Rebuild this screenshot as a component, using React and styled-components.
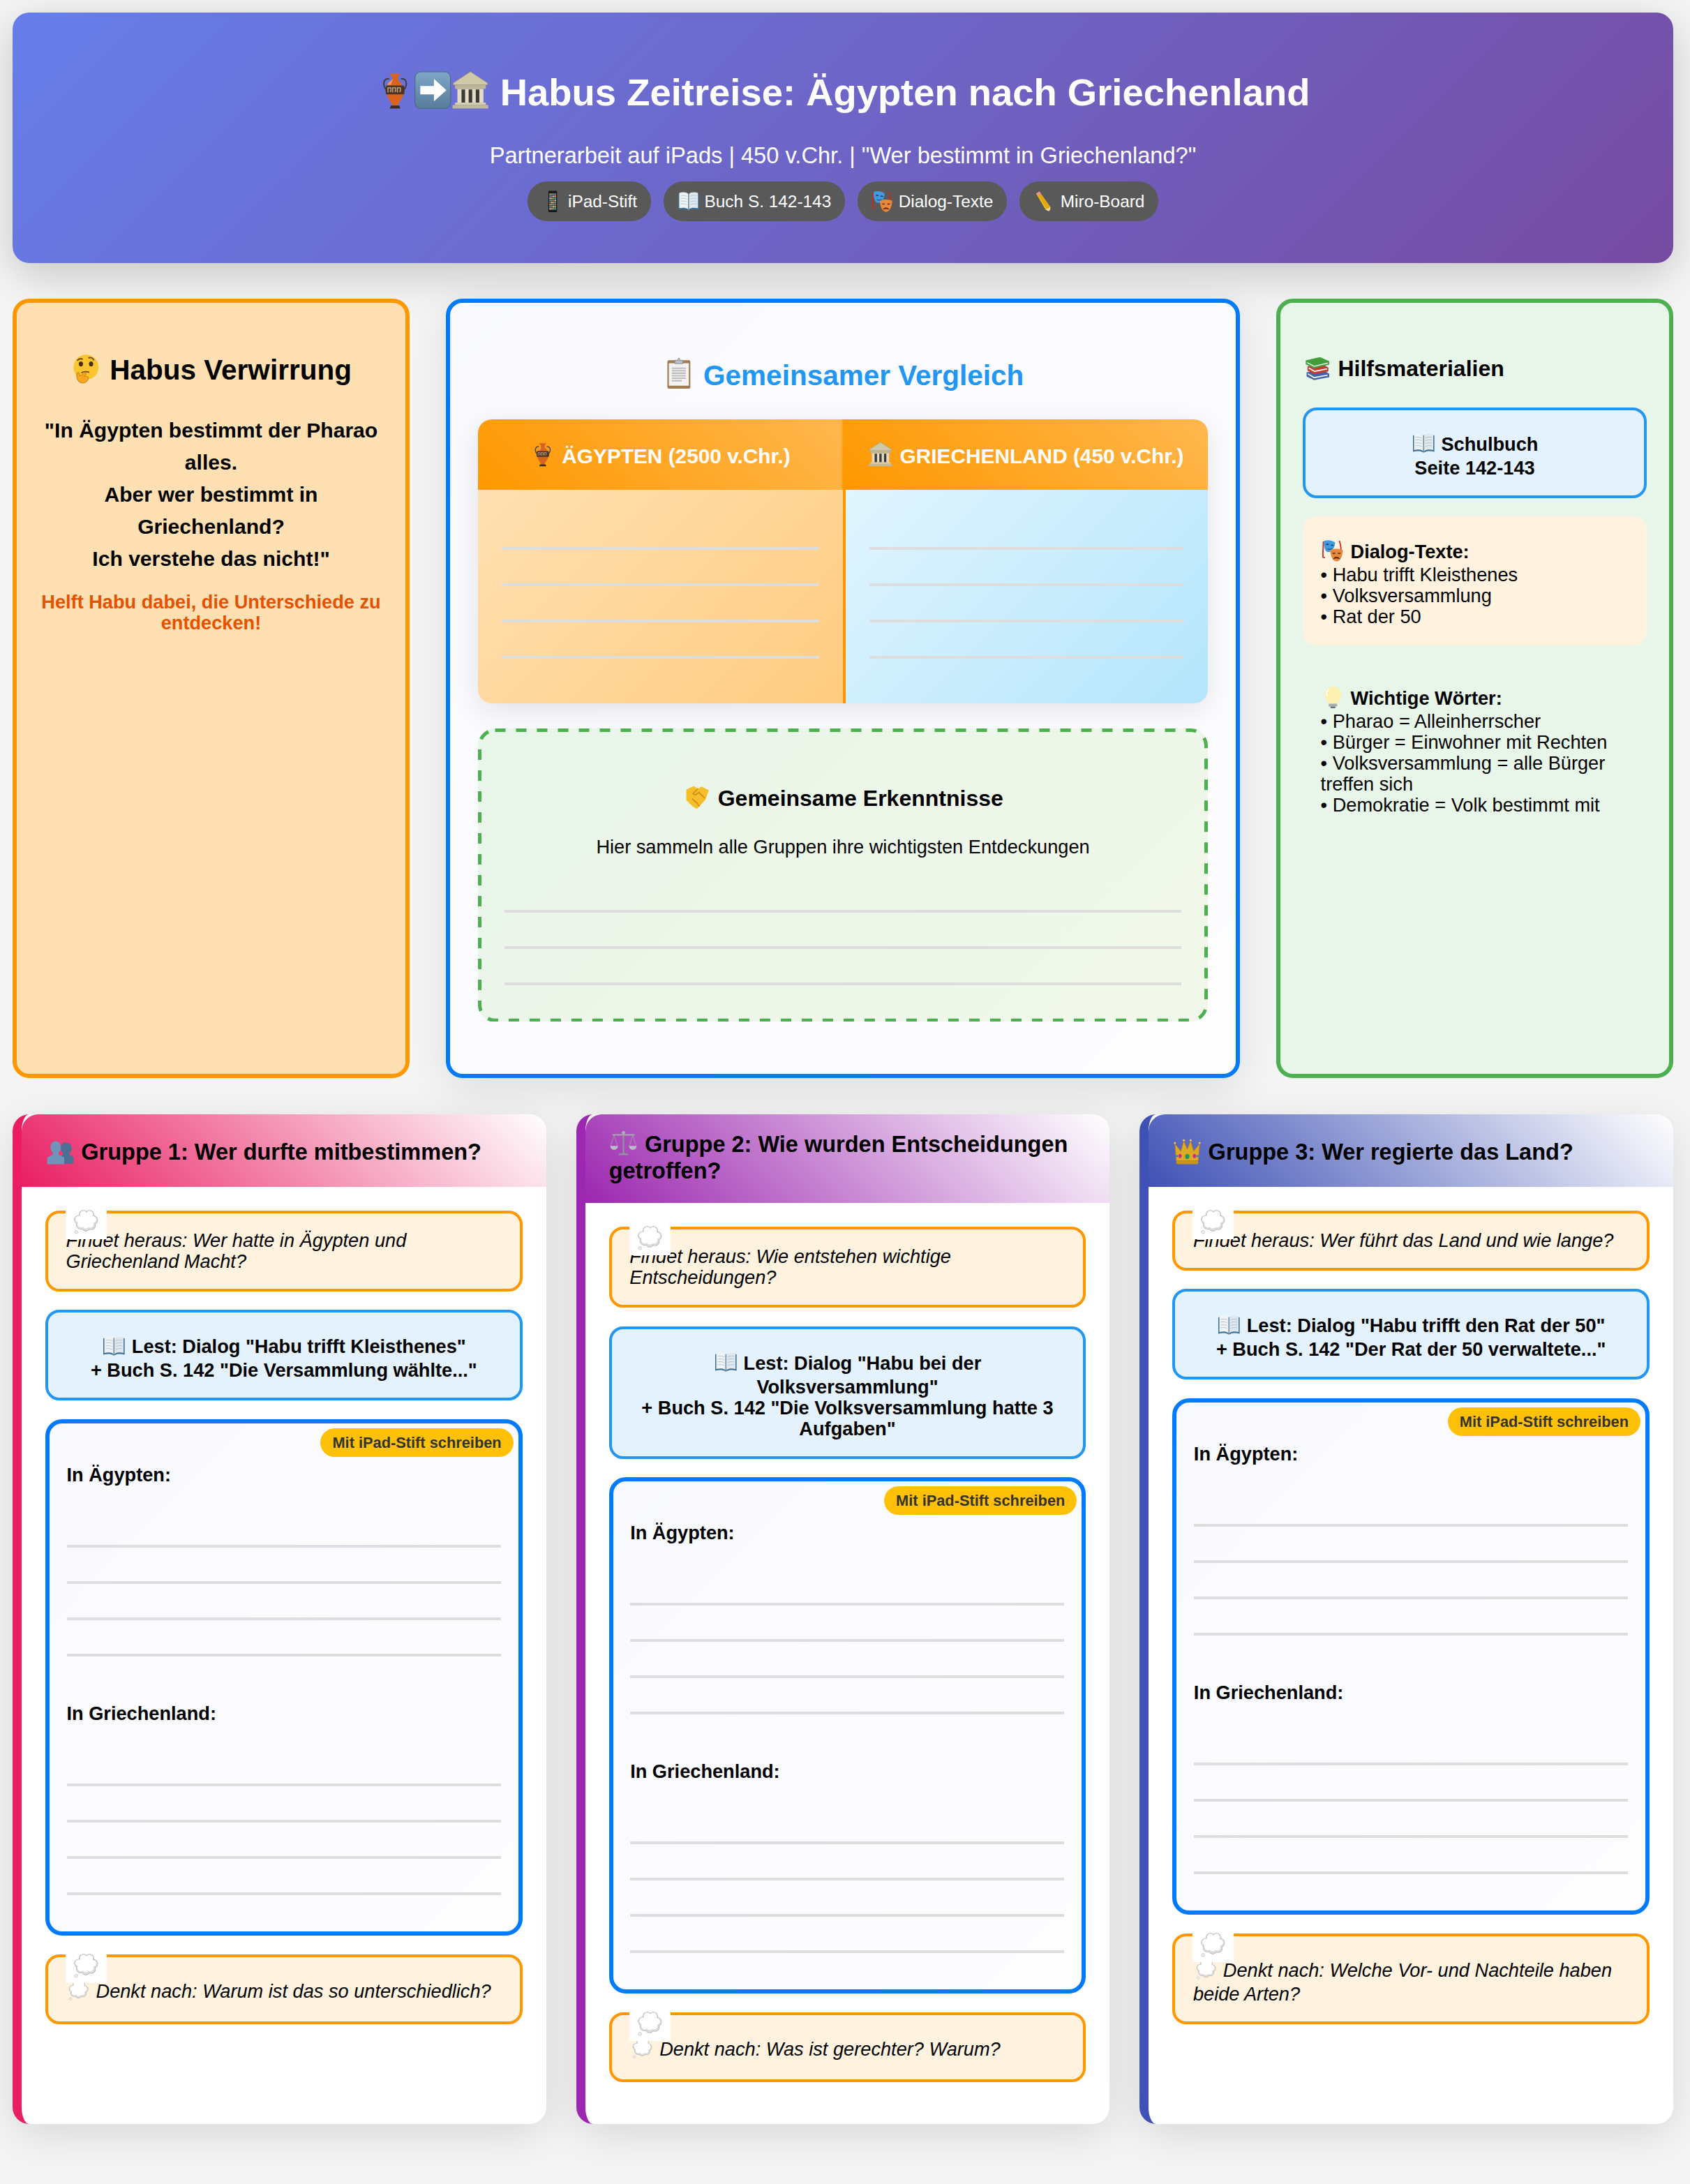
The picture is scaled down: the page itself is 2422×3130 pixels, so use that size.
import React from 'react';
import styled, { createGlobalStyle, css } from 'styled-components';

const Global = createGlobalStyle`
  html, body { margin: 0; padding: 0; background: #f5f5f5; }
  body { font-family: "Liberation Sans", Arial, sans-serif; color: #000; }
  * { box-sizing: border-box; }
`;

const Emoji = styled.svg`
  display: inline-block;
  box-sizing: content-box;
  width: ${p => p.$s || 1.2}em;
  height: ${p => p.$s || 1.2}em;
  ${p => p.$flat
    ? css`
      margin: -1em ${p.$side ?? 0.05}em 0;
      vertical-align: ${p.$va || '-.09em'};
    `
    : css`
      margin: ${1.265 + (p.$low ?? 0.2) - (p.$s || 1.2)}em ${p.$side ?? 0.05}em 0;
      padding-bottom: ${0.353 - (p.$low ?? 0.2)}em;
      vertical-align: -.353em;
    `}
`;

const glyphs = {
  vase: (<g>
    <path d="M22 13c-6-1-9 3-9 8s3 10 8 13M42 13c6-1 9 3 9 8s-3 10-8 13" fill="none" stroke="#3d3f46" strokeWidth="2.5" />
    <path d="M24 4h16v3l-3 2v5c0 3 10 7 10 19 0 11-9 20-11 25h-8c-2-5-11-14-11-25 0-12 10-16 10-19V9l-3-2z" fill="#d8641e" />
    <path d="M17.300 24h29.400c.8 2.500 1.300 5.500 1.300 9 0 2-.3 4-.9 6H16.900c-.6-2-.9-4-.9-6 0-3.500.5-6.500 1.300-9z" fill="#4a3428" />
    <path d="M20 36v-8h5v6h-2M28 36v-8h5v6h-2M36 36v-8h5v6h-2" fill="none" stroke="#d9b184" strokeWidth="1.500" />
    <path d="M25 58h14l2 5H23z" fill="#3b2a22" />
    <path d="M27 14c-3 3-7 5-8 9h6c1-3 3-6 3-9z" fill="#f19a55" />
  </g>),
  arrow: (<g>
    <defs><linearGradient id="arrowBg" x1="0" y1="0" x2="0" y2="1"><stop offset="0" stopColor="#7fa6c8" /><stop offset="1" stopColor="#587b9a" /></linearGradient></defs>
    <rect x="2" y="1" width="60" height="62" rx="10" fill="url(#arrowBg)" stroke="#4d6d8a" strokeWidth="1.500" />
    <path d="M11 25h23V13l21 19-21 19V39H11z" fill="#fff" />
  </g>),
  temple: (<g>
    <path d="M32 1 61 20v3H3v-3z" fill="#cfc8a9" stroke="#9a9478" strokeWidth="1" />
    <rect x="6" y="23" width="52" height="7" fill="#bdb696" />
    <rect x="10" y="30" width="44" height="23" fill="#e3ddc2" />
    <path d="M17 31h6v22h-6zM29 31h6v22h-6zM41 31h6v22h-6z" fill="#3a3a36" />
    <rect x="6" y="53" width="52" height="4" fill="#d5cfb2" />
    <rect x="2" y="57" width="60" height="6" fill="#bfb899" />
  </g>),
  ipad: (<g>
    <rect x="20" y="1" width="25" height="62" rx="3" fill="#161618" />
    <rect x="22" y="7" width="21" height="50" fill="#31343a" />
    {[0, 1, 2, 3, 4, 5, 6, 7].map(r => [0, 1, 2, 3].map(c => (
      <rect key={r + '-' + c} x={23 + c * 5} y={9 + r * 6} width="4" height="4" fill={['#e8b23a', '#5fc36e', '#4fa6e8', '#e96a5a', '#d9d9d9'][(r * 2 + c) % 5]} />
    )))}
  </g>),
  book: (<g>
    <path d="M2 10c10-4 22-4 30 1 8-5 20-5 30-1v46c-10-3-22-3-30 2-8-5-20-5-30-2z" fill="#3f6f93" />
    <path d="M5 7c9-3 20-3 26 3v44C25 49 14 49 5 51z" fill="#eef3f6" />
    <path d="M59 7c-9-3-20-3-26 3v44c6-5 17-5 26-3z" fill="#dfe8ee" />
    <path d="M9 15c6-1 13-1 18 2M9 23c6-1 13-1 18 2M9 31c6-1 13-1 18 2M9 39c6-1 13-1 18 2M55 15c-6-1-13-1-18 2M55 23c-6-1-13-1-18 2M55 31c-6-1-13-1-18 2M55 39c-6-1-13-1-18 2" stroke="#a9b8c3" strokeWidth="1.500" fill="none" />
    <rect x="30.500" y="9" width="3" height="49" fill="#7d93a3" />
  </g>),
  masks: (<g>
    <path d="M5 6c0 18-2 30-1 44l6 2M50 4c4 12 6 24 4 38" stroke="#c72a22" strokeWidth="3.500" fill="none" />
    <path d="M6 5c10-5 24-3 32 4-1 14-8 27-19 27C9 36 6 20 6 5z" fill="#3f9ae0" />
    <path d="M13 15c2-2 5-2 7 0M26 17c2-1 5-1 7 1" stroke="#123f66" strokeWidth="3" fill="none" />
    <path d="M14 24c5 4 11 4 16 1-2 6-13 6-16-1z" fill="#123f66" />
    <path d="M24 30c10-5 26-5 36 0-1 16-7 32-18 32S25 46 24 30z" fill="#e8883a" />
    <path d="M31 38c2 2 5 2 7 0M46 38c2 2 5 2 7 0" stroke="#5a2c10" strokeWidth="3" fill="none" />
    <path d="M34 54c4-5 12-5 16 0-5-2-11-2-16 0z" fill="#5a2c10" stroke="#5a2c10" strokeWidth="2" />
  </g>),
  pencil: (<g>
    <path d="M8 9 17 3l32 45-1 14-13-7z" fill="#f5c31c" />
    <path d="M17 3l32 45-1 14-8-5-28-45z" fill="#e3a90e" />
    <path d="M8 9 17 3l5 7-9 6z" fill="#e8948f" />
    <path d="M35 55l13 7 1-14z" fill="#e9d3ae" />
    <path d="M43.500 60 48 62l.4-5z" fill="#333" />
  </g>),
  clipboard: (<g>
    <rect x="9" y="6" width="46" height="57" rx="3" fill="#a37b4c" />
    <rect x="12" y="12" width="40" height="45" fill="#f2f2f2" />
    <path d="M18 22h28M18 27h28M18 32h28M18 37h28M18 42h28M18 47h20" stroke="#bdbdbd" strokeWidth="3" />
    <path d="M24 6h6c0-6 4-6 4 0h6v7H24z" fill="#b8bcc2" stroke="#7d8086" strokeWidth="1" />
  </g>),
  handshake: (<g>
    <path d="M6 14 24 6l10 6 8-5 18 9-8 22-18 20c-4 3-8 1-9-2-4 0-7-3-7-6-4 0-6-3-6-6-4-1-6-4-6-6z" fill="#f6bf2a" />
    <path d="M34 12 22 24c3 4 7 3 10 0l4-3 14 14" fill="none" stroke="#c98a12" strokeWidth="2.500" />
    <path d="M20 36l8 8M27 42l7 7M33 50l5 4" stroke="#c98a12" strokeWidth="2.500" />
  </g>),
  books: (<g>
    <path d="M6 44 44 38l16 10v8L24 63 6 54z" fill="#3f62a8" />
    <path d="M9 48 24 57l32-6" stroke="#eee" strokeWidth="3" fill="none" />
    <path d="M8 30 42 24l16 9v9l-34 7-16-9z" fill="#c8392f" />
    <path d="M11 34l14 8 30-6" stroke="#eee" strokeWidth="3" fill="none" />
    <path d="M4 16 38 8l22 10v8l-36 9-20-10z" fill="#3f9d3c" />
    <path d="M7 21 24 30l33-8" stroke="#e8f4e0" strokeWidth="2.500" fill="none" />
  </g>),
  bulb: (<g>
    <path d="M32 2c-14 0-24 10-24 23 0 10 8 15 11 25h26c3-10 11-15 11-25C56 12 46 2 32 2z" fill="#fdf1b2" />
    <path d="M20 10c-6 5-7 13-4 19" stroke="#fff" strokeWidth="4" fill="none" />
    <rect x="20" y="50" width="24" height="8" rx="2" fill="#a9adb3" />
    <rect x="25" y="58" width="14" height="5" rx="2" fill="#6e7277" />
  </g>),
  think: (<g>
    <circle cx="32" cy="29" r="27" fill="#fbc52f" />
    <path d="M13 15c3-4 8-5 12-3M37 9c5-2 10 0 12 5" stroke="#7a4a12" strokeWidth="3" fill="none" />
    <ellipse cx="21" cy="22" rx="4.500" ry="5.500" fill="#4a2c10" />
    <ellipse cx="43" cy="22" rx="4.500" ry="5.500" fill="#4a2c10" />
    <path d="M22 41c5-3 11-3 17-1" stroke="#7a4a12" strokeWidth="3" fill="none" />
    <path d="M13 42c-3 8 0 21 12 21 8 0 13-6 12-12-1-4-8-2-10-2l5-4c2-3-1-5-4-3l-9 6-2-6c-1-3-3-3-4 0z" fill="#f4a71f" stroke="#c97f12" strokeWidth="1.500" />
  </g>),
  people: (<g>
    <path d="M44 12c-7 0-11 6-11 13 0 5 2 9 5 11v5l-9 5v16h34V46l-9-5v-5c3-2 5-6 5-11 0-7-8-13-15-13z" fill="#4c6f92" />
    <path d="M21 9C13 9 9 16 9 23c0 6 2 10 5 12v6L1 47v16h40V47l-13-6v-6c3-2 5-6 5-12 0-7-4-14-12-14z" fill="#6f95bb" />
  </g>),
  scales: (<g>
    <rect x="30" y="8" width="4" height="48" fill="#8e9299" />
    <circle cx="32" cy="7" r="4" fill="#a9adb4" />
    <path d="M6 12h52" stroke="#a0a4ab" strokeWidth="3.500" />
    <path d="M10 13 2 38M10 13l8 25M54 13l-8 25M54 13l8 25" stroke="#9a9ea5" strokeWidth="1.500" fill="none" />
    <path d="M1 38h18c0 6-4 9-9 9s-9-3-9-9zM45 38h18c0 6-4 9-9 9s-9-3-9-9z" fill="#b9bdc4" />
    <path d="M20 60c0-4 6-5 12-5s12 1 12 5z" fill="#8e9299" />
  </g>),
  crown: (<g>
    <path d="M3 15 17 33 24 8l8 20 8-20 7 25 14-18-3 40H6z" fill="#dfa928" stroke="#b47f16" strokeWidth="1.500" />
    <circle cx="3" cy="13" r="2.500" fill="#f0c64a" /><circle cx="24" cy="7" r="2.500" fill="#f0c64a" /><circle cx="40" cy="7" r="2.500" fill="#f0c64a" /><circle cx="61" cy="13" r="2.500" fill="#f0c64a" />
    <rect x="6" y="55" width="52" height="8" rx="3" fill="#c9931b" />
    <ellipse cx="32" cy="45" rx="5" ry="6" fill="#1c9a5a" />
    <ellipse cx="15" cy="44" rx="4" ry="5" fill="#c3327a" />
    <ellipse cx="49" cy="44" rx="4" ry="5" fill="#c3327a" />
    <circle cx="8" cy="44" r="2.500" fill="#2b7fc9" /><circle cx="56" cy="44" r="2.500" fill="#2b7fc9" />
  </g>),
  cloud: (<g>
    <g fill="#a9a9a9">
      <circle cx="27" cy="12" r="11.500" /><circle cx="42" cy="12" r="11.500" /><circle cx="52" cy="25" r="11" />
      <circle cx="46" cy="38" r="11.500" /><circle cx="33" cy="42" r="11" /><circle cx="20" cy="37" r="11.500" />
      <circle cx="15" cy="24" r="11" />
    </g>
    <g fill="#dcdcdc">
      <circle cx="27" cy="12" r="10.500" /><circle cx="42" cy="12" r="10.500" /><circle cx="52" cy="25" r="10" />
      <circle cx="46" cy="38" r="10.500" /><circle cx="33" cy="42" r="10" /><circle cx="20" cy="37" r="10.500" />
      <circle cx="15" cy="24" r="10" />
    </g>
    <g fill="#fff">
      <circle cx="27" cy="11" r="8.500" /><circle cx="42" cy="11" r="8.500" /><circle cx="50" cy="24" r="8.500" />
      <circle cx="44" cy="36" r="8" /><circle cx="33" cy="38" r="8" /><circle cx="21" cy="35" r="8.500" />
      <circle cx="16" cy="23" r="8.500" /><circle cx="33" cy="24" r="14" />
    </g>
    <circle cx="9" cy="55" r="3.800" fill="#f4f4f4" stroke="#b5b5b5" strokeWidth="1.200" />
  </g>),
};

const Icon = ({ name, ...rest }) => (
  <Emoji viewBox="0 0 64 64" aria-hidden="true" {...rest}>{glyphs[name]}</Emoji>
);

const Page = styled.div`
  width: 2380px;
  margin-left: 18px;
  padding: 18px 0 85px;
`;

const Hero = styled.header`
  height: 359px;
  padding: 84px 40px 0;
  border-radius: 24px;
  background: linear-gradient(135deg, #667eea 0%, #764ba2 100%);
  color: #fff;
  text-align: center;
  box-shadow: 0 16px 64px rgba(0, 0, 0, .2);
`;

const Title = styled.h1`
  margin: 0 0 41px;
  font-size: 54.4px;
  line-height: 62px;
  font-weight: 700;
`;

const Subtitle = styled.p`
  margin: 0 0 19px;
  font-size: 32.64px;
  line-height: 36px;
`;

const Pills = styled.div`
  display: flex;
  justify-content: center;
  gap: 18px;
`;

const Pill = styled.span`
  height: 57px;
  padding: 12px 20px;
  border-radius: 28px;
  background: #595959;
  font-size: 24.4px;
  line-height: 33px;
  white-space: nowrap;
`;

const Main = styled.section`
  display: grid;
  grid-template-columns: 1fr 2fr 1fr;
  gap: 52px;
  margin: 51px 0 52px;
`;

const Panel = styled.div`
  border: 6px solid ${p => p.$border};
  border-radius: 24px;
  background: ${p => p.$bg};
`;

const HabuPanel = styled(Panel)`
  padding: 59px 32px 32px;
  text-align: center;
`;

const BigHeading = styled.h2`
  margin: 0;
  font-size: 40.5px;
  line-height: 46px;
  font-weight: 700;
  color: ${p => p.$color || '#000'};
  text-align: center;
`;

const Quote = styled.p`
  margin: 35px 0 24px;
  font-size: 30.1px;
  line-height: 46px;
  font-weight: 700;
`;

const Help = styled.p`
  margin: 0;
  font-size: 27.2px;
  line-height: 30px;
  font-weight: 700;
  color: #e65100;
`;

const CompareCard = styled(Panel)`
  padding: 67px 40px 75px;
  box-shadow: 0 16px 64px rgba(0, 0, 0, .1);
`;

const Table = styled.div`
  display: grid;
  grid-template-columns: 1fr 1fr;
  grid-template-rows: 101px 306px;
  margin: 34px 0 36px;
  border-radius: 20px;
  overflow: hidden;
  box-shadow: 0 10px 40px rgba(0, 0, 0, .1);
`;

const TableHead = styled.div`
  padding: 25px 10px 0;
  background: linear-gradient(45deg, #ff9800, #ffb74d);
  color: #fff;
  text-align: center;
  font-size: 29.8px;
  line-height: 34px;
  font-weight: 700;
  white-space: nowrap;
  ${p => p.$first && css`border-right: 2px solid rgba(255, 255, 255, .12);`}
`;

const Cell = styled.div`
  padding: 34px 34px 0;
  background: ${p => p.$first
    ? 'linear-gradient(135deg, #ffe0b2, #ffcc80)'
    : 'linear-gradient(135deg, #e1f5fe, #b3e5fc)'};
  ${p => !p.$first && css`border-left: 4px solid #ff9800;`}
`;

const Rule = styled.div`
  height: 52px;
  border-bottom: 4px solid #ddd;
`;

const Shared = styled.div`
  position: relative;
  padding: 71px 38px 52px;
  border-radius: 24px;
  background: linear-gradient(135deg, #e8f5e9, #f1f8e9);
  text-align: center;
`;

const DashFrame = styled.svg`
  position: absolute;
  inset: 0;
  width: 100%;
  height: 100%;
  fill: none;
  stroke: #4caf50;
  stroke-width: 5px;
  stroke-dasharray: 15 15;
  pointer-events: none;

  rect {
    x: 2.5px;
    y: 2.5px;
    width: calc(100% - 5px);
    height: calc(100% - 5px);
    rx: 22px;
    ry: 22px;
  }
`;

const MidHeading = styled.h3`
  margin: 0;
  font-size: 32px;
  line-height: 37px;
  font-weight: 700;
`;

const SharedText = styled.p`
  margin: 33px 0 27px;
  font-size: 27.2px;
  line-height: 30px;
`;

const ToolsPanel = styled(Panel)`
  padding: 65px 32px 32px;
`;

const BlueBox = styled.div`
  padding: 24px 25.6px;
  border: 4px solid #2196f3;
  border-radius: 20px;
  background: #e3f2fd;
  text-align: center;
  font-size: 27.2px;
  line-height: 30px;
  font-weight: 700;
`;

const BookCard = styled(BlueBox)`
  margin: 33px 0 26px;
`;

const InfoBox = styled.div`
  padding: 25.6px;
  border-radius: 20px;
  background: ${p => p.$bg || 'transparent'};
  font-size: 27.2px;
  line-height: 30px;
  & + & { margin-top: 25px; }
`;

const Groups = styled.section`
  display: grid;
  grid-template-columns: repeat(3, 1fr);
  gap: 43px;
`;

const Group = styled.article`
  display: flex;
  flex-direction: column;
  border-left: 13px solid ${p => p.$color};
  border-radius: 24px;
  background: #fff;
  overflow: hidden;
  box-shadow: 0 16px 64px rgba(0, 0, 0, .12);
`;

const GroupHead = styled.h3`
  margin: 0;
  padding: 24px 34px 27px;
  border-radius: 24px 24px 0 0;
  background: linear-gradient(45deg, ${p => p.$color}, #fff);
  font-size: 32.5px;
  line-height: 38px;
  font-weight: 700;
`;

const GroupBody = styled.div`
  display: flex;
  flex-direction: column;
  gap: 26.6px;
  padding: 34px 34px 60px;
`;

const Task = styled.div`
  position: relative;
  padding: 24px 25.6px;
  border: 4px solid #ff9800;
  border-radius: 20px;
  background: #fff3e0;
  font-size: 27.2px;
  line-height: 30px;
  font-style: italic;
`;

const Bubble = styled.span`
  position: absolute;
  top: -5px;
  left: 25px;
  width: 59px;
  height: 42px;
  padding-left: 10px;
  background: #fff;
  font-size: 37px;
  line-height: 0;
  overflow: hidden;
`;

const BubbleIcon = styled(Emoji)`
  margin: 0;
  padding: 0;
  vertical-align: top;
`;

const Write = styled.div`
  position: relative;
  padding: 58px 25px 52px 24.5px;
  border: 6px solid #007aff;
  border-radius: 24px;
  background: linear-gradient(135deg, #f9faff, #fdfdff);
`;

const PenTag = styled.span`
  position: absolute;
  top: 7px;
  right: 7px;
  height: 41px;
  padding: 0 17px;
  border-radius: 21px;
  background: #ffc107;
  color: #333;
  font-size: 21.8px;
  line-height: 41px;
  font-weight: 700;
`;

const Label = styled.div`
  margin: 0 0 36px;
  font-size: 27.2px;
  line-height: 32px;
  font-weight: 700;
  ${p => p.$second && css`margin-top: 66px;`}
`;

const Lines = ({ n = 4 }) => Array.from({ length: n }, (_, i) => <Rule key={i} />);

const groups = [
  {
    color: '#e91e63',
    icon: 'people',
    title: 'Gruppe 1: Wer durfte mitbestimmen?',
    find: 'Findet heraus: Wer hatte in Ägypten und Griechenland Macht?',
    read: ['Lest: Dialog "Habu trifft Kleisthenes"', '+ Buch S. 142 "Die Versammlung wählte..."'],
    think: 'Denkt nach: Warum ist das so unterschiedlich?',
  },
  {
    color: '#9c27b0',
    icon: 'scales',
    flat: true,
    title: 'Gruppe 2: Wie wurden Entscheidungen getroffen?',
    find: 'Findet heraus: Wie entstehen wichtige Entscheidungen?',
    read: ['Lest: Dialog "Habu bei der Volksversammlung"', '+ Buch S. 142 "Die Volksversammlung hatte 3 Aufgaben"'],
    think: 'Denkt nach: Was ist gerechter? Warum?',
  },
  {
    color: '#3f51b5',
    icon: 'crown',
    title: 'Gruppe 3: Wer regierte das Land?',
    find: 'Findet heraus: Wer führt das Land und wie lange?',
    read: ['Lest: Dialog "Habu trifft den Rat der 50"', '+ Buch S. 142 "Der Rat der 50 verwaltete..."'],
    think: 'Denkt nach: Welche Vor- und Nachteile haben beide Arten?',
  },
];

const BubbleTag = () => (
  <Bubble>
    <BubbleIcon viewBox="0 0 64 64" $s={1}>{glyphs.cloud}</BubbleIcon>
  </Bubble>
);

const GroupCard = ({ g }) => (
  <Group $color={g.color}>
    <GroupHead $color={g.color}>
      {g.flat
        ? <Icon name={g.icon} $flat $va="-.2em" />
        : <Icon name={g.icon} />}{' '}{g.title}
    </GroupHead>
    <GroupBody>
      <Task><BubbleTag />{g.find}</Task>
      <BlueBox>
        <Icon name="book" /> {g.read[0]}<br />{g.read[1]}
      </BlueBox>
      <Write>
        <PenTag>Mit iPad-Stift schreiben</PenTag>
        <Label>In Ägypten:</Label>
        <Lines />
        <Label $second>In Griechenland:</Label>
        <Lines />
      </Write>
      <Task><BubbleTag /><Icon name="cloud" $s={1.1} $side={.1} /> {g.think}</Task>
    </GroupBody>
  </Group>
);

export default function App() {
  return (
    <Page>
      <Global />
      <Hero>
        <Title>
          <Icon name="vase" $flat $s={1} $side={0} />
          <Icon name="arrow" $flat $s={1} $side={0} />
          <Icon name="temple" $flat $s={1} $side={0} />{' '}
          Habus Zeitreise: Ägypten nach Griechenland
        </Title>
        <Subtitle>Partnerarbeit auf iPads | 450 v.Chr. | "Wer bestimmt in Griechenland?"</Subtitle>
        <Pills>
          <Pill><Icon name="ipad" $flat $s={1.3} $side={0} $va="-.3em" /> iPad-Stift</Pill>
          <Pill><Icon name="book" $flat $s={1.3} $side={0} $va="-.3em" /> Buch S. 142-143</Pill>
          <Pill><Icon name="masks" $flat $s={1.3} $side={0} $va="-.3em" /> Dialog-Texte</Pill>
          <Pill><Icon name="pencil" $flat $s={1.3} $side={0} $va="-.3em" /> Miro-Board</Pill>
        </Pills>
      </Hero>

      <Main>
        <HabuPanel $border="#ff9800" $bg="#ffe0b2">
          <BigHeading><Icon name="think" $s={1.05} $side={.03} $low={.14} /> Habus Verwirrung</BigHeading>
          <Quote>
            "In Ägypten bestimmt der Pharao alles.<br />
            Aber wer bestimmt in Griechenland?<br />
            Ich verstehe das nicht!"
          </Quote>
          <Help>Helft Habu dabei, die Unterschiede zu entdecken!</Help>
        </HabuPanel>

        <CompareCard $border="#007aff" $bg="linear-gradient(135deg, #f9faff, #fdfdff)">
          <BigHeading $color="#2196f3"><Icon name="clipboard" $s={1.13} $side={.03} $low={.14} /> Gemeinsamer Vergleich</BigHeading>
          <Table>
            <TableHead $first><Icon name="vase" /> ÄGYPTEN (2500 v.Chr.)</TableHead>
            <TableHead><Icon name="temple" /> GRIECHENLAND (450 v.Chr.)</TableHead>
            <Cell $first><Lines /></Cell>
            <Cell><Lines /></Cell>
          </Table>
          <Shared>
            <DashFrame aria-hidden="true"><rect /></DashFrame>
            <MidHeading><Icon name="handshake" /> Gemeinsame Erkenntnisse</MidHeading>
            <SharedText>Hier sammeln alle Gruppen ihre wichtigsten Entdeckungen</SharedText>
            <Lines n={3} />
          </Shared>
        </CompareCard>

        <ToolsPanel $border="#4caf50" $bg="#e8f5e9">
          <MidHeading><Icon name="books" /> Hilfsmaterialien</MidHeading>
          <BookCard><Icon name="book" /> Schulbuch<br />Seite 142-143</BookCard>
          <InfoBox $bg="#fff3e0">
            <strong><Icon name="masks" /> Dialog-Texte:</strong><br />
            • Habu trifft Kleisthenes<br />
            • Volksversammlung<br />
            • Rat der 50
          </InfoBox>
          <InfoBox>
            <strong><Icon name="bulb" /> Wichtige Wörter:</strong><br />
            • Pharao = Alleinherrscher<br />
            • Bürger = Einwohner mit Rechten<br />
            • Volksversammlung = alle Bürger treffen sich<br />
            • Demokratie = Volk bestimmt mit
          </InfoBox>
        </ToolsPanel>
      </Main>

      <Groups>
        {groups.map(g => <GroupCard key={g.title} g={g} />)}
      </Groups>
    </Page>
  );
}
